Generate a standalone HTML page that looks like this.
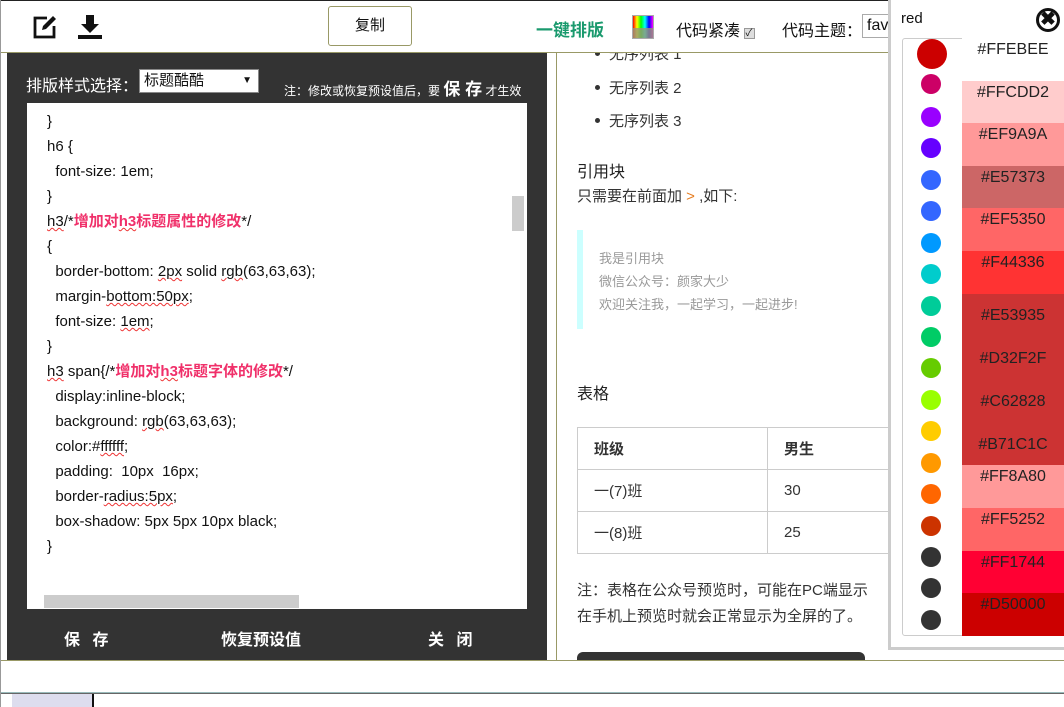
<!DOCTYPE html>
<html><head><meta charset="utf-8"><style>
*{margin:0;padding:0;box-sizing:border-box}
body{width:1064px;height:707px;overflow:hidden;background:#fff;font-family:"Liberation Sans","Noto Sans CJK SC",sans-serif;position:relative;color:#333}
.abs{position:absolute}
.code div{height:25px;line-height:25px;font-size:15px;color:#111;white-space:pre}
.pk{color:#f0306a;font-weight:bold}
.sq{text-decoration:underline wavy #e33;text-decoration-thickness:1px}
.dot{position:absolute;left:921px;width:20px;height:20px;border-radius:50%}
.sw{position:absolute;left:962px;width:102px;height:43px;text-align:center;font-size:16px;color:#222;padding-top:3px}
td{border:1px solid #ccc;height:42px;padding-left:16px;font-size:15px}
.li{position:absolute;left:609px;font-size:15px;color:#333}
.li:before{content:"";position:absolute;left:-14px;top:8px;width:5px;height:5px;border-radius:50%;background:#333}
</style></head><body>
<div class="abs" style="left:0;top:0;width:1064px;height:1px;background:#222"></div>
<svg class="abs" style="left:32px;top:14px" width="28" height="26" viewBox="0 0 28 26"><path d="M15 4H3v19h19V12" fill="none" stroke="#111" stroke-width="2.8"/><path d="M10 16l1-4L21 2l3 3L14 15z" fill="#111"/></svg>
<svg class="abs" style="left:77px;top:14px" width="26" height="26" viewBox="0 0 26 26"><path d="M9 1h8v9h5l-9 9-9-9h5z" fill="#111"/><rect x="1" y="21" width="24" height="4" fill="#111"/></svg>
<div class="abs" style="left:328px;top:6px;width:84px;height:40px;border:1px solid #999966;border-radius:3px;text-align:center;line-height:38px;font-size:15px;color:#111">复制</div>
<!-- preview (clipped) -->
<div class="abs" style="left:557px;top:53px;width:331px;height:607px;overflow:hidden">
<div style="position:absolute;left:-557px;top:-53px;width:1064px;height:707px">
<div class="li" style="top:43px">无序列表 1</div>
<div class="li" style="top:77px">无序列表 2</div>
<div class="li" style="top:110px">无序列表 3</div>
<div class="abs" style="left:577px;top:158px;font-size:16px;color:#222">引用块</div>
<div class="abs" style="left:577px;top:185px;font-size:15px;color:#333">只需要在前面加 <span style="color:#e67e22">&gt;</span> ,如下:</div>
<div class="abs" style="left:577px;top:230px;width:6px;height:99px;background:#ccffff"></div>
<div class="abs" style="left:599px;top:247px;font-size:13px;color:#999;line-height:23px">我是引用块<br>微信公众号：颜家大少<br>欢迎关注我，一起学习，一起进步!</div>
<div class="abs" style="left:577px;top:380px;font-size:16px;color:#222">表格</div>
<table class="abs" style="left:577px;top:427px;border-collapse:collapse;width:330px">
<tr><td style="width:190px;font-weight:bold">班级</td><td style="font-weight:bold">男生</td></tr>
<tr><td>一(7)班</td><td>30</td></tr><tr><td>一(8)班</td><td>25</td></tr></table>
<div class="abs" style="left:577px;top:578px;font-size:15px;color:#333;line-height:26px;width:320px;white-space:nowrap">注：表格在公众号预览时，可能在PC端显示<br>在手机上预览时就会正常显示为全屏的了。</div>
<div class="abs" style="left:577px;top:652px;width:288px;height:10px;background:#333;border-radius:6px 6px 0 0"></div>
</div></div>
<div class="abs" style="left:536px;top:16px;font-size:17px;font-weight:bold;color:#1a9a6e">一键排版</div>
<div class="abs" style="left:632px;top:15px;width:22px;height:24px;border:1px solid #aaa;background:linear-gradient(90deg,red,yellow,lime,cyan,blue,magenta)"><div style="position:absolute;bottom:0;left:0;right:0;height:10px;background:rgba(150,150,120,.8)"></div></div>
<div class="abs" style="left:676px;top:17px;font-size:16px;color:#111">代码紧凑 <span style="display:inline-block;width:11px;height:11px;border:1px solid #999;background:#ddd;font-size:10px;line-height:10px">✓</span></div>
<div class="abs" style="left:782px;top:17px;font-size:16px;color:#111">代码主题：</div>
<div class="abs" style="left:862px;top:14px;width:40px;height:24px;border:1px solid #aaa;font-size:16px;line-height:22px;padding-left:4px;color:#111;background:#fff">fav</div>
<div class="abs" style="left:0;top:52px;width:890px;height:1px;background:#999966"></div>
<!-- left panel -->
<div class="abs" style="left:7px;top:53px;width:540px;height:607px;background:#333"></div>
<div class="abs" style="left:556px;top:53px;width:1px;height:607px;background:#999966"></div>
<div class="abs" style="left:26px;top:72px;font-size:16px;color:#fff">排版样式选择：</div>
<div class="abs" style="left:139px;top:69px;width:120px;height:24px;background:#fff;border:1px solid #888;font-size:15px;line-height:22px;padding-left:4px;color:#111">标题酷酷<span style="position:absolute;right:6px;font-size:10px">▼</span></div>
<div class="abs" style="left:284px;top:75px;font-size:12px;color:#fff">注：修改或恢复预设值后，要 <b style="font-size:17px">保 存</b> 才生效</div>
<div class="abs code" style="left:27px;top:103px;width:500px;height:506px;background:#fff;overflow:hidden;padding-left:20px;padding-top:6px">
<div>}</div><div>h6 {</div><div>  font-size: 1em;</div><div>}</div>
<div><span class="sq">h3</span>/*<span class="pk">增加对<span class="sq">h3</span>标题属性的修改</span>*/</div>
<div>{</div><div>  border-bottom: <span class="sq">2px</span> solid <span class="sq">rgb</span>(63,63,63);</div>
<div>  margin-<span class="sq">bottom:50px</span>;</div><div>  font-size: <span class="sq">1em</span>;</div><div>}</div>
<div><span class="sq">h3</span> span{/*<span class="pk">增加对<span class="sq">h3</span>标题字体的修改</span>*/</div>
<div>  display:inline-block;</div><div>  background: <span class="sq">rgb</span>(63,63,63);</div>
<div>  color:#<span class="sq">ffffff</span>;</div><div>  padding:  10px  16px;</div>
<div>  border-<span class="sq">radius:5px</span>;</div><div>  box-shadow: 5px 5px 10px black;</div><div>}</div>
</div>
<div class="abs" style="left:512px;top:196px;width:12px;height:35px;background:#ccc"></div>
<div class="abs" style="left:44px;top:595px;width:255px;height:13px;background:#ccc"></div>
<div class="abs" style="left:64px;top:626px;font-size:16px;color:#fff;font-weight:bold;letter-spacing:4px">保 存</div>
<div class="abs" style="left:221px;top:626px;font-size:16px;color:#fff;font-weight:bold">恢复预设值</div>
<div class="abs" style="left:428px;top:626px;font-size:16px;color:#fff;font-weight:bold;letter-spacing:4px">关 闭</div>
<!-- color panel -->
<div class="abs" style="left:888px;top:0;width:176px;height:650px;background:#fff;border-left:3px solid #ccc;border-bottom:3px solid #ccc"></div>
<div class="abs" style="left:901px;top:10px;font-size:15px;color:#111">red</div>
<div class="abs" style="left:1036px;top:8px;width:24px;height:24px;border-radius:50%;border:3px solid #111;font-size:19px;line-height:17px;text-align:center;font-weight:bold;color:#111">✖</div>
<div class="abs" style="left:902px;top:38px;width:162px;height:598px;border:1px solid #ccc;border-radius:3px"></div>
<div class="abs" style="left:917px;top:39px;width:30px;height:30px;border-radius:50%;background:#cc0000"></div>
<div class="dot" style="top:74px;background:#cc0066"></div>
<div class="dot" style="top:107px;background:#9900ff"></div>
<div class="dot" style="top:138px;background:#6600ff"></div>
<div class="dot" style="top:170px;background:#3366ff"></div>
<div class="dot" style="top:201px;background:#3366ff"></div>
<div class="dot" style="top:233px;background:#0099ff"></div>
<div class="dot" style="top:264px;background:#00cccc"></div>
<div class="dot" style="top:296px;background:#00cc99"></div>
<div class="dot" style="top:327px;background:#00cc66"></div>
<div class="dot" style="top:358px;background:#66cc00"></div>
<div class="dot" style="top:390px;background:#99ff00"></div>
<div class="dot" style="top:421px;background:#ffcc00"></div>
<div class="dot" style="top:453px;background:#ff9900"></div>
<div class="dot" style="top:484px;background:#ff6600"></div>
<div class="dot" style="top:516px;background:#cc3300"></div>
<div class="dot" style="top:547px;background:#333"></div>
<div class="dot" style="top:578px;background:#333"></div>
<div class="dot" style="top:610px;background:#333"></div>
<div class="sw" style="top:38px;background:#fff">#FFEBEE</div>
<div class="sw" style="top:81px;background:#ffcccc">#FFCDD2</div>
<div class="sw" style="top:123px;background:#ff9999">#EF9A9A</div>
<div class="sw" style="top:166px;background:#cc6666">#E57373</div>
<div class="sw" style="top:208px;background:#ff6666">#EF5350</div>
<div class="sw" style="top:251px;background:#ff3333">#F44336</div>
<div class="sw" style="top:294px;height:171px;background:#cc3333;line-height:43px;padding-top:0">#E53935<br>#D32F2F<br>#C62828<br>#B71C1C</div>
<div class="sw" style="top:465px;background:#ff9999">#FF8A80</div>
<div class="sw" style="top:508px;background:#ff6666">#FF5252</div>
<div class="sw" style="top:551px;background:#ff0033">#FF1744</div>
<div class="sw" style="top:593px;background:#cc0000">#D50000</div>
<!-- bottom -->
<div class="abs" style="left:0;top:660px;width:1064px;height:1px;background:#999966"></div>
<div class="abs" style="left:0;top:692px;width:1064px;height:1px;background:#9bb"></div>
<div class="abs" style="left:0;top:693px;width:1064px;height:14px;background:#fff;border-top:1px solid #666"></div>
<div class="abs" style="left:12px;top:694px;width:80px;height:13px;background:#dde"></div>
<div class="abs" style="left:92px;top:694px;width:2px;height:13px;background:#111"></div>
<div class="abs" style="left:0;top:0;width:1px;height:707px;background:#999"></div>
</body></html>
